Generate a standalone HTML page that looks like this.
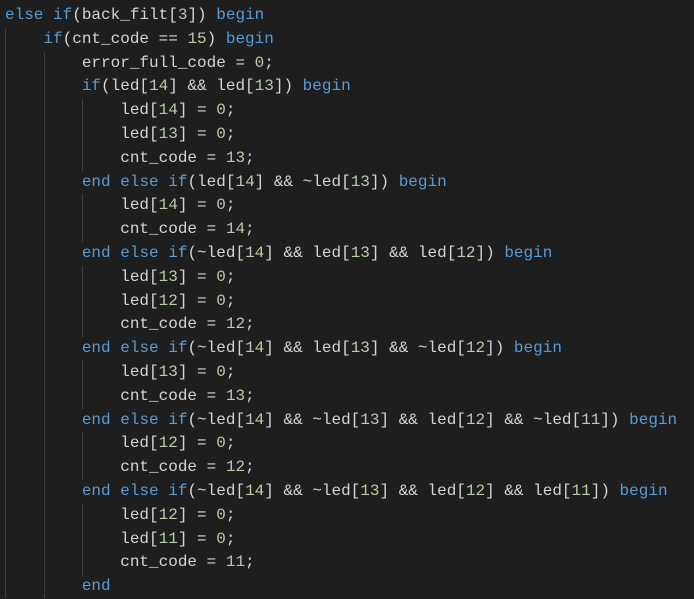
<!DOCTYPE html>
<html><head><style>
body{margin:0;background:#1e1e1e;width:694px;height:595px;overflow:hidden;position:relative}
pre{margin:0;position:absolute;left:5px;top:4px;font-family:"Liberation Mono",monospace;font-size:16px;line-height:23.8px;color:#d4d4d4}
.k{color:#569cd6}.n{color:#b5cea8}
.g{position:absolute;width:1px;background:#404040}
</style></head><body>
<div class="g" style="left:5px;top:27.8px;height:570px"></div>
<div class="g" style="left:44px;top:51.6px;height:546px"></div>
<div class="g" style="left:82px;top:99.2px;height:71.4px"></div>
<div class="g" style="left:82px;top:194.4px;height:47.6px"></div>
<div class="g" style="left:82px;top:265.8px;height:71.4px"></div>
<div class="g" style="left:82px;top:361px;height:47.6px"></div>
<div class="g" style="left:82px;top:432.4px;height:47.6px"></div>
<div class="g" style="left:82px;top:503.8px;height:71.4px"></div>
<pre><span class="k">else</span> <span class="k">if</span>(back_filt[<span class="n">3</span>]) <span class="k">begin</span>
    <span class="k">if</span>(cnt_code == <span class="n">15</span>) <span class="k">begin</span>
        error_full_code = <span class="n">0</span>;
        <span class="k">if</span>(led[<span class="n">14</span>] &amp;&amp; led[<span class="n">13</span>]) <span class="k">begin</span>
            led[<span class="n">14</span>] = <span class="n">0</span>;
            led[<span class="n">13</span>] = <span class="n">0</span>;
            cnt_code = <span class="n">13</span>;
        <span class="k">end</span> <span class="k">else</span> <span class="k">if</span>(led[<span class="n">14</span>] &amp;&amp; ~led[<span class="n">13</span>]) <span class="k">begin</span>
            led[<span class="n">14</span>] = <span class="n">0</span>;
            cnt_code = <span class="n">14</span>;
        <span class="k">end</span> <span class="k">else</span> <span class="k">if</span>(~led[<span class="n">14</span>] &amp;&amp; led[<span class="n">13</span>] &amp;&amp; led[<span class="n">12</span>]) <span class="k">begin</span>
            led[<span class="n">13</span>] = <span class="n">0</span>;
            led[<span class="n">12</span>] = <span class="n">0</span>;
            cnt_code = <span class="n">12</span>;
        <span class="k">end</span> <span class="k">else</span> <span class="k">if</span>(~led[<span class="n">14</span>] &amp;&amp; led[<span class="n">13</span>] &amp;&amp; ~led[<span class="n">12</span>]) <span class="k">begin</span>
            led[<span class="n">13</span>] = <span class="n">0</span>;
            cnt_code = <span class="n">13</span>;
        <span class="k">end</span> <span class="k">else</span> <span class="k">if</span>(~led[<span class="n">14</span>] &amp;&amp; ~led[<span class="n">13</span>] &amp;&amp; led[<span class="n">12</span>] &amp;&amp; ~led[<span class="n">11</span>]) <span class="k">begin</span>
            led[<span class="n">12</span>] = <span class="n">0</span>;
            cnt_code = <span class="n">12</span>;
        <span class="k">end</span> <span class="k">else</span> <span class="k">if</span>(~led[<span class="n">14</span>] &amp;&amp; ~led[<span class="n">13</span>] &amp;&amp; led[<span class="n">12</span>] &amp;&amp; led[<span class="n">11</span>]) <span class="k">begin</span>
            led[<span class="n">12</span>] = <span class="n">0</span>;
            led[<span class="n">11</span>] = <span class="n">0</span>;
            cnt_code = <span class="n">11</span>;
        <span class="k">end</span></pre>
</body></html>
